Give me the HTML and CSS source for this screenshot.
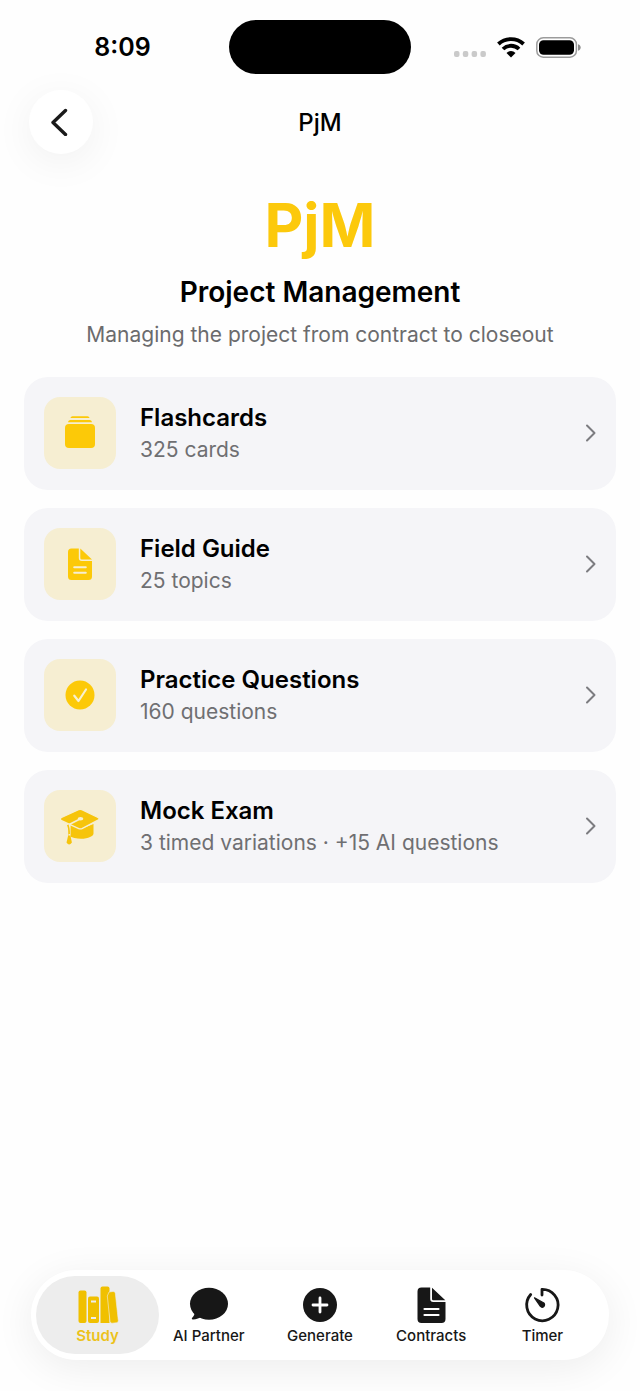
FILE: index.html
```html
<!DOCTYPE html>
<html lang="en">
<head>
    <meta charset="UTF-8">
    <meta name="viewport" content="width=device-width, initial-scale=1.0">
    <title>PjM</title>
    <link rel="stylesheet" href="styles.css">
</head>
<body>
    <div class="status-bar">
        <span class="time">8:09</span>
        <div class="island"></div>
        <div class="status-icons">
            <svg width="32" height="21" viewBox="0 0 32 21" fill="#cacaca">
                <rect x="0" y="14" width="5.5" height="6" rx="2"/>
                <rect x="8.8" y="14" width="5.5" height="6" rx="2"/>
                <rect x="17.6" y="14" width="5.5" height="6" rx="2"/>
                <rect x="26.4" y="14" width="5.5" height="6" rx="2"/>
            </svg>
            <svg width="28" height="21" viewBox="0 0 28 21">
                <path d="M1.4 7a18.500 18.500 0 0 1 25.200 0M6 12a11.500 11.500 0 0 1 16 0" fill="none" stroke="#000" stroke-width="3.800"/>
                <path d="M14 20.4L9.500 15.900a6.500 6.500 0 0 1 9 0z"/>
            </svg>
            <svg width="45" height="21" viewBox="0 0 45 21">
                <rect x="0.8" y="0.8" width="39.6" height="19.4" rx="6.5" fill="none" stroke="#9b9b9b" stroke-width="1.5"/>
                <rect x="3" y="3.2" width="35" height="14.6" rx="4.5"/>
                <path d="M42 7.2c3.6 1 3.6 5.6 0 6.6z" fill="#8e8e8e"/>
            </svg>
        </div>
    </div>

    <header class="nav-bar">
        <button class="back-button" aria-label="Back">
            <svg width="18" height="28" viewBox="0 0 18 28" fill="none" stroke="#1a1a1a" stroke-width="3.4" stroke-linecap="round" stroke-linejoin="round">
                <path d="M15.5 2.500L3 14.500l12.500 12"/>
            </svg>
        </button>
        <span class="nav-title">PjM</span>
    </header>

    <main class="content">
        <div class="hero">
            <h1>PjM</h1>
            <h2>Project Management</h2>
            <p>Managing the project from contract to closeout</p>
        </div>

        <div class="cards">
            <a class="card" href="#flashcards">
                <span class="card-icon">
                    <svg width="40" height="40" viewBox="0 0 40 40" fill="#fcc908">
                        <rect x="5" y="11" width="30" height="24" rx="4"/>
                        <path d="M8 9.200c.4-1.400 1.200-2.200 2.400-2.200h19.200c1.200 0 2 .8 2.400 2.200z"/>
                        <path d="M10.500 5c.3-1.100 1-1.800 2-1.800h15c1 0 1.700.7 2 1.800z"/>
                    </svg>
                </span>
                <span class="card-text">
                    <span class="card-title">Flashcards</span>
                    <span class="card-subtitle">325 cards</span>
                </span>
                <svg class="chevron" width="12" height="20" viewBox="0 0 12 20"><path d="M3 2.500l7.500 7.500L3 17.500"/></svg>
            </a>
            <a class="card" href="#field-guide">
                <span class="card-icon">
                    <svg width="40" height="40" viewBox="0 0 40 40">
                        <path fill="#fcc908" d="M11.500 4.500h7.300v9.500a3 3 0 0 0 3 3H32v15.500a3.500 3.500 0 0 1-3.500 3.500h-17A3.500 3.500 0 0 1 8 32.500V8a3.500 3.500 0 0 1 3.500-3.500zM20.300 4.600L32 15.500H21.800a1.500 1.500 0 0 1-1.500-1.500z"/>
                        <path stroke="#f6eed2" stroke-width="2" stroke-linecap="round" d="M14.200 23.200h11.600M14.200 28.800h11.600"/>
                    </svg>
                </span>
                <span class="card-text">
                    <span class="card-title">Field Guide</span>
                    <span class="card-subtitle">25 topics</span>
                </span>
                <svg class="chevron" width="12" height="20" viewBox="0 0 12 20"><path d="M3 2.500l7.500 7.500L3 17.500"/></svg>
            </a>
            <a class="card" href="#practice">
                <span class="card-icon">
                    <svg width="40" height="40" viewBox="0 0 40 40">
                        <circle cx="20" cy="20" r="14.500" fill="#fcc908"/>
                        <path d="M14.300 20.700l4.200 5.300 7.500-11.500" fill="none" stroke="#f8f0d0" stroke-width="2.200" stroke-linecap="round" stroke-linejoin="round"/>
                    </svg>
                </span>
                <span class="card-text">
                    <span class="card-title">Practice Questions</span>
                    <span class="card-subtitle">160 questions</span>
                </span>
                <svg class="chevron" width="12" height="20" viewBox="0 0 12 20"><path d="M3 2.500l7.500 7.500L3 17.500"/></svg>
            </a>
            <a class="card" href="#mock-exam">
                <span class="card-icon">
                    <svg width="40" height="40" viewBox="0 0 40 40">
                        <path fill="#f6c40c" d="M8.500 18l12 5 13-5v9.500c0 2.500-5 5.300-12.500 5.300-4.500 0-9-1.300-12.500-3z"/>
                        <path fill="#f6c40c" stroke="#f6eed2" stroke-width="1.300" d="M1.500 11.500L18.500 3.700q1.700-.7 3.400 0L38 11.500q2.200 1.200 0 2.700L22 22.600q-1.600.7-3.200 0L1.500 14.700q-2.300-1.600 0-3.200z"/>
                        <path fill="none" stroke="#f6eed2" stroke-width="1.800" d="M20.500 12.800L9.700 18.200v14"/>
                        <ellipse cx="20.500" cy="12.800" rx="2.800" ry="1.700" fill="#f6eed2"/>
                        <path fill="none" stroke="#f6c40c" stroke-width="1.500" d="M7.600 19c1 1.500 1.600 3 1.600 9"/>
                        <path fill="#f6c40c" d="M8.200 29.500h2.200l1.500 7q-2.800 3.800-5.400 0z"/>
                    </svg>
                </span>
                <span class="card-text">
                    <span class="card-title">Mock Exam</span>
                    <span class="card-subtitle">3 timed variations · +15 AI questions</span>
                </span>
                <svg class="chevron" width="12" height="20" viewBox="0 0 12 20"><path d="M3 2.500l7.500 7.500L3 17.500"/></svg>
            </a>
        </div>
    </main>

    <nav class="tab-bar">
        <a class="tab active" href="#study">
            <svg width="42" height="40" viewBox="0 0 42 40">
                <g fill="#f0c000">
                    <rect x="1.500" y="5.500" width="8" height="32.500" rx="2"/>
                    <rect x="11" y="11.500" width="11" height="26.500" rx="2"/>
                    <path d="M25.500 1.500h5a2 2 0 0 1 2 2v34.500h-9V3.500a2 2 0 0 1 2-2z"/>
                    <path d="M32 7l4-.5a2 2 0 0 1 2.300 1.700l3 27.300a2 2 0 0 1-1.800 2.300l-4.300.4a2 2 0 0 1-2.200-1.700L30.300 11z" stroke="#ededed" stroke-width=".6"/>
                </g>
                <path d="M14 16.500H19M14 33H19" stroke="#ededed" stroke-width="1.800"/>
            </svg>
            <span>Study</span>
        </a>
        <a class="tab" href="#partner">
            <svg width="42" height="40" viewBox="0 0 42 40" fill="#171717">
                <ellipse cx="21" cy="18.800" rx="19" ry="16"/>
                <path d="M6.500 27c.6 2-.8 4.200-2.300 5.700-.7.800-.4 1.700.6 1.700 3 .1 7-1.400 9.700-3z"/>
            </svg>
            <span>AI Partner</span>
        </a>
        <a class="tab" href="#generate">
            <svg width="42" height="40" viewBox="0 0 42 40">
                <circle cx="21" cy="20" r="17" fill="#171717"/>
                <path d="M21 13v14M14 20h14" stroke="#fff" stroke-width="2.800" stroke-linecap="round"/>
            </svg>
            <span>Generate</span>
        </a>
        <a class="tab" href="#contracts">
            <svg width="42" height="40" viewBox="0 0 42 40">
                <path fill="#171717" d="M11.500 2.500h8.700v11.500a3 3 0 0 0 3 3H35.500v17a4 4 0 0 1-4 4h-20a4 4 0 0 1-4-4V6.500a4 4 0 0 1 4-4zM22 2.700l13.300 12.600H23.200a1.200 1.200 0 0 1-1.200-1.200z"/>
                <path stroke="#fff" stroke-width="2.200" stroke-linecap="round" d="M14.500 24h14M14.500 30h14"/>
            </svg>
            <span>Contracts</span>
        </a>
        <a class="tab" href="#timer">
            <svg width="42" height="40" viewBox="0 0 42 40" fill="none" stroke="#171717" stroke-width="2.800" stroke-linecap="round" stroke-linejoin="round">
                <path d="M21 10V4.300A15.700 15.700 0 1 1 9.700 9.500"/>
                <path d="M13.500 12.800l9.400 5.200a2.400 2.400 0 0 1-3.500 3.400z" fill="#171717" stroke-width="1.200"/>
            </svg>
            <span>Timer</span>
        </a>
    </nav>
</body>
</html>
```

FILE: styles.css
```css
* {
    box-sizing: border-box;
}
body {
    margin: 0;
    min-height: 100vh;
    display: flex;
    flex-direction: column;
    font-family: Inter, "Liberation Sans", sans-serif;
    background-color: #fefefe;
    color: #000;
}
a {
    color: inherit;
    text-decoration: none;
}
svg {
    display: block;
    flex-shrink: 0;
}
.status-bar {
    display: grid;
    grid-template-columns: 1fr 182px 1fr;
    align-items: center;
    padding: 20px 16px 0;
}
.time {
    text-align: center;
    font-size: 25px;
    font-weight: 600;
}
.island {
    height: 54px;
    border-radius: 27px;
    background-color: #000;
}
.status-icons {
    display: flex;
    justify-content: center;
    align-items: center;
    gap: 11px;
}
.nav-bar {
    display: grid;
    grid-template-columns: 64px 1fr 64px;
    align-items: center;
    padding: 16px 29px 0;
}
.back-button {
    width: 64px;
    height: 64px;
    padding: 0 5px 0 0;
    display: flex;
    align-items: center;
    justify-content: center;
    border: none;
    border-radius: 50%;
    background-color: #fff;
    box-shadow: 0 8px 40px rgba(0, 0, 0, 0.06);
    cursor: pointer;
}
.nav-title {
    text-align: center;
    font-size: 24px;
    font-weight: 500;
}
.content {
    padding: 32px 24px;
}
.hero {
    text-align: center;
}
.hero h1 {
    margin: 0;
    font-size: 60px;
    line-height: 78px;
    font-weight: 700;
    color: #fcc90c;
}
.hero h2 {
    margin: 8px 0 0;
    font-size: 28px;
    line-height: 40px;
    font-weight: 600;
}
.hero p {
    margin: 7px 0 0;
    font-size: 21px;
    line-height: 32px;
    color: #6b6b6d;
}
.cards {
    display: flex;
    flex-direction: column;
    gap: 18px;
    margin-top: 26px;
}
.card {
    display: flex;
    align-items: center;
    gap: 24px;
    padding: 20px 20px 21px;
    border-radius: 24px;
    background-color: #f5f5f8;
}
.card-icon {
    width: 72px;
    height: 72px;
    display: flex;
    align-items: center;
    justify-content: center;
    border-radius: 16px;
    background-color: #f6eed2;
}
.card-text {
    flex: 1;
    display: flex;
    flex-direction: column;
    padding-top: 2px;
    line-height: 32px;
}
.card-title {
    font-size: 24px;
    font-weight: 600;
}
.card-subtitle {
    font-size: 21px;
    color: #6f6f72;
}
.chevron {
    fill: none;
    stroke: #7c7c80;
    stroke-width: 2;
    stroke-linecap: round;
    stroke-linejoin: round;
}
.tab-bar {
    display: grid;
    grid-template-columns: repeat(5, 1fr);
    margin: auto 31px 31px;
    padding: 6px 11px;
    border-radius: 45px;
    background-color: #fff;
    box-shadow: 0 8px 40px rgba(0, 0, 0, 0.07);
}
.tab {
    height: 78px;
    display: flex;
    flex-direction: column;
    align-items: center;
    padding-top: 9px;
    border-radius: 39px;
    font-size: 15px;
    line-height: 22px;
    font-weight: 500;
    color: #171717;
}
.tab.active {
    margin: 0 -6px;
    background-color: #ededed;
    color: #ecc21c;
    font-weight: 600;
}
```
